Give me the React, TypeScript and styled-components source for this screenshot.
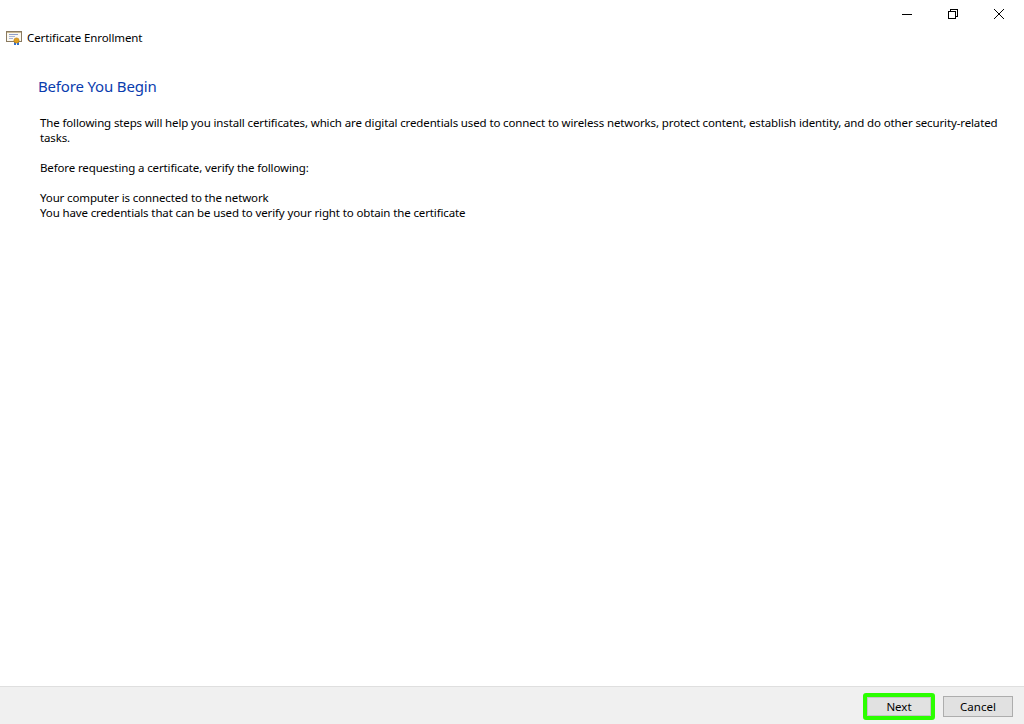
import React from "react";
import styled, { createGlobalStyle } from "styled-components";

const Global = createGlobalStyle`
  html, body { margin: 0; padding: 0; background: #fff; }
  #root { width: 1024px; height: 724px; }
`;

const Window = styled.div`
  width: 1024px;
  height: 724px;
  display: flex;
  flex-direction: column;
  overflow: hidden;
  font-family: "Noto Sans", "Open Sans", sans-serif;
  font-size: 11.5px;
  color: #000;
  background: #fff;
`;

const TitleBar = styled.div`
  height: 28px;
  display: flex;
  justify-content: flex-end;
  padding-right: 2px;
`;

const CaptionButton = styled.div`
  width: 46px;
  height: 28px;
  display: flex;
  align-items: center;
  justify-content: center;
`;

const Content = styled.div`
  flex: 1;
  display: flex;
  flex-direction: column;
`;

const AppRow = styled.div`
  height: 16px;
  margin-top: 1px;
  display: flex;
  align-items: center;
  gap: 5px;
  padding-left: 6px;
`;

const AppName = styled.span`
  font-size: 11.5px;
  letter-spacing: -0.1px;
  white-space: nowrap;
`;

const Heading = styled.h1`
  margin: 30px 0 0 38px;
  font-size: 15px;
  line-height: 22px;
  font-weight: 400;
  color: #0a3cae;
  letter-spacing: -0.17px;
`;

const Body = styled.div`
  margin: 18px 20px 0 40px;
  line-height: 15px;
`;

const Para = styled.p<{ $gap?: number }>`
  margin: 0 0 ${(p) => p.$gap ?? 0}px;
  letter-spacing: -0.13px;
`;

const Footer = styled.div`
  height: 38px;
  flex: none;
  box-sizing: border-box;
  background: #f0f0f0;
  border-top: 1px solid #dfdfdf;
  display: flex;
  justify-content: flex-end;
  align-items: center;
  gap: 8px;
  padding: 2px 11px 0 0;
`;

const Button = styled.div<{ $focus?: boolean }>`
  width: ${(p) => (p.$focus ? 72 : 70)}px;
  height: ${(p) => (p.$focus ? 27 : 21)}px;
  box-sizing: border-box;
  display: flex;
  align-items: center;
  justify-content: center;
  font-size: 11.5px;
  background: #e1e1e1;
  border: ${(p) => (p.$focus ? "4px solid #2bff00" : "1px solid #adadad")};
  border-radius: ${(p) => (p.$focus ? 3 : 0)}px;
  box-shadow: ${(p) => (p.$focus ? "inset 0 0 0 1px #c4c4c4" : "none")};
`;

const CertIcon = () => (
  <svg width="16" height="16" viewBox="0 0 16 16" shapeRendering="crispEdges">
    <rect x="0.5" y="2.5" width="15" height="10" fill="#fbf8f0" stroke="#8a7a60" />
    <rect x="1" y="3" width="14" height="1" fill="#c9b994" />
    <rect x="3" y="5" width="9" height="1" fill="#8f9fc8" />
    <rect x="3" y="7" width="6" height="1" fill="#a8b4d4" />
    <rect x="3" y="9" width="4" height="1" fill="#a8b4d4" />
    <rect x="8" y="13" width="2" height="3" fill="#2f6fd0" />
    <rect x="11" y="13" width="2" height="3" fill="#2f6fd0" />
    <circle cx="10.5" cy="11.5" r="2.6" fill="#e0a020" stroke="#b57a10" strokeWidth="0.6" shapeRendering="auto" />
  </svg>
);

const Minimize = () => (
  <svg width="10" height="10" viewBox="0 0 10 10" shapeRendering="crispEdges">
    <rect x="0" y="5" width="10" height="1" fill="#000" />
  </svg>
);

const Restore = () => (
  <svg width="10" height="10" viewBox="0 0 10 10" shapeRendering="crispEdges" fill="none" stroke="#000">
    <rect x="0.5" y="2.5" width="7" height="7" />
    <path d="M2.5 2.5V0.5H9.5V7.5H7.5" />
  </svg>
);

const Close = () => (
  <svg width="10" height="10" viewBox="0 0 10 10" fill="none" stroke="#000" strokeWidth="1">
    <path d="M0 0L10 10M10 0L0 10" />
  </svg>
);

export default function App() {
  return (
    <Window>
      <Global />
      <TitleBar>
        <CaptionButton><Minimize /></CaptionButton>
        <CaptionButton><Restore /></CaptionButton>
        <CaptionButton><Close /></CaptionButton>
      </TitleBar>
      <Content>
        <AppRow>
          <CertIcon />
          <AppName>Certificate Enrollment</AppName>
        </AppRow>
        <Heading>Before You Begin</Heading>
        <Body>
          <Para $gap={15}>
            The following steps will help you install certificates, which are digital credentials used to connect to wireless networks, protect content, establish identity, and do other security-related tasks.
          </Para>
          <Para $gap={15}>Before requesting a certificate, verify the following:</Para>
          <Para>Your computer is connected to the network</Para>
          <Para>You have credentials that can be used to verify your right to obtain the certificate</Para>
        </Body>
      </Content>
      <Footer>
        <Button $focus>Next</Button>
        <Button>Cancel</Button>
      </Footer>
    </Window>
  );
}
